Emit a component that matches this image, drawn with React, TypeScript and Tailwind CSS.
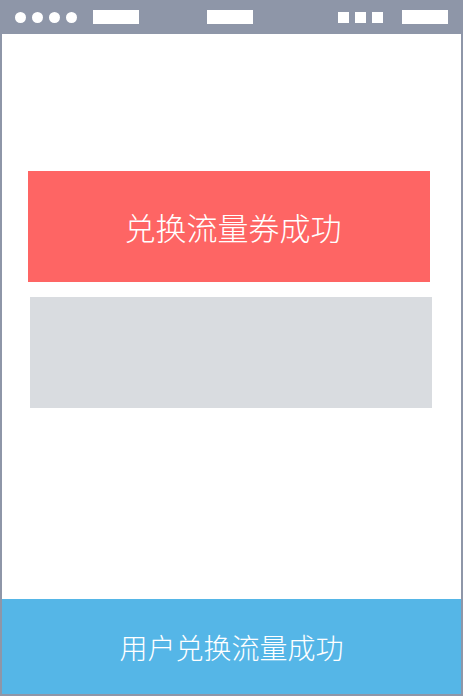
export default function App() {
  return (
    <div className="w-[463px] h-[696px] flex flex-col bg-[#8e96a8] font-['Noto_Sans_CJK_SC',sans-serif]">
      <div className="h-[34px] flex items-center pl-[15px] pr-[15px] shrink-0">
        <div className="flex gap-[6px]">
          <span className="w-[11px] h-[11px] rounded-full bg-white" />
          <span className="w-[11px] h-[11px] rounded-full bg-white" />
          <span className="w-[11px] h-[11px] rounded-full bg-white" />
          <span className="w-[11px] h-[11px] rounded-full bg-white" />
        </div>
        <span className="ml-[16px] w-[46px] h-[14px] bg-white" />
        <span className="ml-[68px] w-[46px] h-[14px] bg-white" />
        <div className="ml-auto flex gap-[6px]">
          <span className="w-[11px] h-[11px] bg-white" />
          <span className="w-[11px] h-[11px] bg-white" />
          <span className="w-[11px] h-[11px] bg-white" />
        </div>
        <span className="ml-[19px] w-[46px] h-[14px] bg-white" />
      </div>
      <div className="flex-1 flex flex-col ml-[2px] mr-[2px] mb-[2px] bg-white">
        <div className="flex-1 flex flex-col pt-[137px] pl-[26px]">
          <div className="w-[402px] h-[111px] bg-[#fe6564] flex items-center justify-center pl-[8px] text-white text-[31px] font-light leading-none">
            兑换流量券成功
          </div>
          <div className="ml-[2px] mt-[15px] w-[402px] h-[111px] bg-[#d9dce0]" />
        </div>
        <div className="h-[95px] bg-[#55b6e7] flex items-center justify-center text-white text-[28px] font-light leading-none">
          用户兑换流量成功
        </div>
      </div>
    </div>
  );
}
